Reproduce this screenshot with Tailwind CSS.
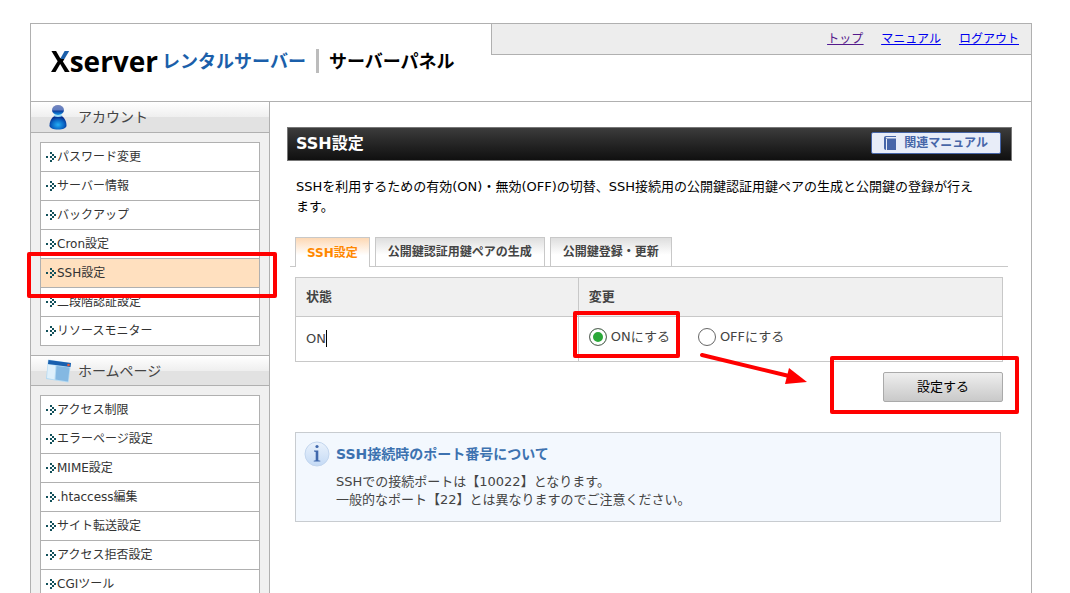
<!DOCTYPE html>
<html lang="ja">
<head>
    <meta charset="UTF-8">
    <meta name="viewport" content="width=device-width, initial-scale=1.0">
    <title>SSH設定 | サーバーパネル</title>
    <script src="https://cdn.jsdelivr.net/npm/@tailwindcss/browser@4"></script>
</head>
<body class="h-screen overflow-hidden bg-white font-['DejaVu_Sans','Noto_Sans_CJK_JP',sans-serif] text-[13px] text-[#444]">

    <!-- サイドメニューの矢印アイコン -->
    <svg class="hidden" aria-hidden="true">
        <symbol id="arrow" viewBox="0 0 10 10" shape-rendering="crispEdges">
            <path fill="#12505a" d="M0 4h2v2H0zM4 0h2v2H4zM6 2h2v2H6zM8 4h2v2H8zM6 6h2v2H6zM4 8h2v2H4zM4 4h2v2H4z"/>
        </symbol>
    </svg>

    <div class="ml-[30px] mr-[38px] mt-[23px] border border-[#b0b0b0]">

        <!-- ヘッダー -->
        <header class="flex h-[78px] items-start justify-between border-b border-[#b0b0b0]">
            <div class="flex items-center pl-5 pt-[18px]">
                <span class="font-['Open_Sans',sans-serif] text-[28px] leading-[38px] font-bold text-black"><span class="bg-[conic-gradient(from_5deg_at_50%_46%,#1b5faa_75deg,#000_75deg)] bg-clip-text text-transparent">X</span>server</span>
                <span class="ml-1 pt-0.5 text-lg font-bold text-[#1b5faa]">レンタルサーバー</span>
                <span class="ml-2.5 h-6 w-[3px] bg-[#bcbcbc]"></span>
                <span class="ml-2.5 pt-0.5 text-lg font-bold text-black">サーバーパネル</span>
            </div>
            <nav class="flex h-[31px] w-[54%] items-center justify-end gap-[18px] border-b border-l border-[#b0b0b0] bg-[#ededed] pr-3 text-xs text-[#0000ee] underline">
                <a href="#" class="text-[#551a8b]">トップ</a>
                <a href="#">マニュアル</a>
                <a href="#">ログアウト</a>
            </nav>
        </header>

        <div class="flex">

            <!-- サイドメニュー -->
            <aside class="w-[239px] shrink-0 border-r border-[#b0b0b0] bg-[#f0f0f0]">
                <h2 class="flex h-[31px] items-center border-b border-[#b0b0b0] bg-[linear-gradient(#fff,#efefef_50%,#e2e2e2_50%,#e2e2e2)] pl-[15px] text-sm">
                    <svg class="mr-1.5 h-[26px] w-[26px]" viewBox="0 0 26 26">
                        <defs>
                            <radialGradient id="body" cx=".5" cy=".65" r=".6"><stop offset="0" stop-color="#25aef5"/><stop offset=".6" stop-color="#0b66c4"/><stop offset="1" stop-color="#06298a"/></radialGradient>
                            <linearGradient id="head" x2="0" y2="1"><stop offset="0" stop-color="#7686bd"/><stop offset=".5" stop-color="#5f7cc0"/><stop offset=".6" stop-color="#0b3c9c"/><stop offset="1" stop-color="#1398ea"/></linearGradient>
                        </defs>
                        <path fill="url(#body)" d="M8.500 12h7c3.500 2 5 6 5 9.500 0 2.500-3.500 4-8.500 4s-8.500-1.500-8.500-4C3.500 18 5 14 8.500 12z"/>
                        <path fill="#9edcf8" d="M7.500 12c2.500 1.200 6.500 1.200 9 0l-1-1.800h-7z"/>
                        <ellipse cx="12" cy="6" rx="6" ry="5" fill="url(#head)"/>
                    </svg>
                    アカウント
                </h2>
                <ul class="mx-[9px] my-[9px] border-x border-t border-[#b0b0b0] bg-white text-xs text-[#333]">
                    <li class="border-b border-[#b0b0b0]"><a href="#" class="flex h-7 items-center gap-px pl-[5px]"><svg class="h-2.5 w-2.5"><use href="#arrow"/></svg>パスワード変更</a></li>
                    <li class="border-b border-[#b0b0b0]"><a href="#" class="flex h-7 items-center gap-px pl-[5px]"><svg class="h-2.5 w-2.5"><use href="#arrow"/></svg>サーバー情報</a></li>
                    <li class="border-b border-[#b0b0b0]"><a href="#" class="flex h-7 items-center gap-px pl-[5px]"><svg class="h-2.5 w-2.5"><use href="#arrow"/></svg>バックアップ</a></li>
                    <li class="border-b border-[#b0b0b0]"><a href="#" class="flex h-7 items-center gap-px pl-[5px]"><svg class="h-2.5 w-2.5"><use href="#arrow"/></svg>Cron設定</a></li>
                    <li class="relative border-b border-[#b0b0b0] bg-[#ffe0bf]">
                        <a href="#" class="flex h-7 items-center gap-px pl-[5px]"><svg class="h-2.5 w-2.5"><use href="#arrow"/></svg>SSH設定</a>
                        <span class="pointer-events-none absolute -top-[7px] -right-[18px] -bottom-[11px] -left-[14px] z-10 rounded-xs border-4 border-[#f00]"></span>
                    </li>
                    <li class="border-b border-[#b0b0b0]"><a href="#" class="flex h-7 items-center gap-px pl-[5px]"><svg class="h-2.5 w-2.5"><use href="#arrow"/></svg>二段階認証設定</a></li>
                    <li class="border-b border-[#b0b0b0]"><a href="#" class="flex h-7 items-center gap-px pl-[5px]"><svg class="h-2.5 w-2.5"><use href="#arrow"/></svg>リソースモニター</a></li>
                </ul>
                <h2 class="flex h-[31px] items-center border-y border-[#b0b0b0] bg-[linear-gradient(#fff,#efefef_50%,#e2e2e2_50%,#e2e2e2)] pl-[15px] text-sm">
                    <svg class="mr-1.5 h-[26px] w-[26px]" viewBox="0 0 26 26">
                        <path fill="#b4daf3" d="M2 1.500 25 5 22.500 24.500 0 21z"/>
                        <path fill="#dff0fb" d="M2 6.500 9.500 7.500 8.500 21.500 1 20z"/>
                        <path fill="#84b8e2" d="M10.500 8 23.500 9.500 22 23.500 9.500 21.500z"/>
                        <path fill="#185fae" d="M2.500 2 25 5 24.500 9 2 6z"/>
                        <circle cx="22.500" cy="7" r="1.300" fill="#f05a32"/>
                    </svg>
                    ホームページ
                </h2>
                <ul class="mx-[9px] my-[9px] border-x border-t border-[#b0b0b0] bg-white text-xs text-[#333]">
                    <li class="border-b border-[#b0b0b0]"><a href="#" class="flex h-7 items-center gap-px pl-[5px]"><svg class="h-2.5 w-2.5"><use href="#arrow"/></svg>アクセス制限</a></li>
                    <li class="border-b border-[#b0b0b0]"><a href="#" class="flex h-7 items-center gap-px pl-[5px]"><svg class="h-2.5 w-2.5"><use href="#arrow"/></svg>エラーページ設定</a></li>
                    <li class="border-b border-[#b0b0b0]"><a href="#" class="flex h-7 items-center gap-px pl-[5px]"><svg class="h-2.5 w-2.5"><use href="#arrow"/></svg>MIME設定</a></li>
                    <li class="border-b border-[#b0b0b0]"><a href="#" class="flex h-7 items-center gap-px pl-[5px]"><svg class="h-2.5 w-2.5"><use href="#arrow"/></svg>.htaccess編集</a></li>
                    <li class="border-b border-[#b0b0b0]"><a href="#" class="flex h-7 items-center gap-px pl-[5px]"><svg class="h-2.5 w-2.5"><use href="#arrow"/></svg>サイト転送設定</a></li>
                    <li class="border-b border-[#b0b0b0]"><a href="#" class="flex h-7 items-center gap-px pl-[5px]"><svg class="h-2.5 w-2.5"><use href="#arrow"/></svg>アクセス拒否設定</a></li>
                    <li class="border-b border-[#b0b0b0]"><a href="#" class="flex h-7 items-center gap-px pl-[5px]"><svg class="h-2.5 w-2.5"><use href="#arrow"/></svg>CGIツール</a></li>
                </ul>
            </aside>

            <!-- メイン -->
            <main class="min-w-0 flex-1 pt-[25px] pr-[19px] pl-[17px]">
                <div class="flex h-[34px] items-center justify-between border border-[#777] bg-linear-to-b from-[#3c3c3c] to-[#101010] pr-2.5 pl-2">
                    <h1 class="text-base font-bold text-white">SSH設定</h1>
                    <a href="#" class="mb-0.5 flex h-[22px] items-center rounded-xs border border-[#4766a8] bg-[#e8edf8] px-3 text-xs font-bold text-[#4766a8]">
                        <svg class="mr-2 h-3.5 w-3" viewBox="0 0 12 14">
                            <path fill="#4766a8" d="M2 0h10v1H2.500c-1 0-1 1.500 0 1.500H12V14H3V3H2v11C.800 14 0 13.200 0 12V2C0 .800.800 0 2 0z"/>
                        </svg>
                        関連マニュアル
                    </a>
                </div>

                <p class="mt-4 pr-2 pl-[9px] leading-5 text-black">SSHを利用するための有効(ON)・無効(OFF)の切替、SSH接続用の公開鍵認証用鍵ペアの生成と公開鍵の登録が行え<br>ます。</p>

                <!-- タブ -->
                <div class="mt-5 mr-1 ml-[3px] flex gap-[5px] border-b border-[#c8c8c8] pl-[5px] text-xs font-bold">
                    <a href="#" class="-mb-px flex h-[30px] items-center border border-b-0 border-[#c8c8c8] bg-linear-to-b from-[#fdd8b4] to-white to-60% px-[11px] text-[#ff8800]">SSH設定</a>
                    <a href="#" class="flex h-[29px] items-center border border-b-0 border-[#c8c8c8] bg-linear-to-b from-[#dedede] to-white to-60% px-3">公開鍵認証用鍵ペアの生成</a>
                    <a href="#" class="flex h-[29px] items-center border border-b-0 border-[#c8c8c8] bg-linear-to-b from-[#dedede] to-white to-60% px-3">公開鍵登録・更新</a>
                </div>

                <form class="mt-2.5 mr-[9px] ml-2">
                    <table class="w-full table-fixed border-collapse text-left">
                        <thead>
                            <tr class="h-[39px] bg-[#f0f0f0]">
                                <th class="w-[40%] border border-[#c8c8c8] px-2.5 font-bold">状態</th>
                                <th class="border border-[#c8c8c8] px-2.5 font-bold">変更</th>
                            </tr>
                        </thead>
                        <tbody>
                            <tr class="h-[45px]">
                                <td class="border border-[#c8c8c8] px-2.5"><span class="border-r border-black py-px">ON</span></td>
                                <td class="border border-[#c8c8c8] px-2.5">
                                    <div class="relative flex gap-7 pb-1">
                                        <label class="relative flex items-center gap-1">
                                            <input type="radio" name="ssh" checked class="h-[18px] w-[18px] appearance-none rounded-full border border-[#666] bg-white checked:bg-[#2aa838] checked:shadow-[inset_0_0_0_3px_#fff]">
                                            ONにする
                                            <span class="pointer-events-none absolute -top-4 -right-2.5 -bottom-[11px] -left-4 rounded-xs border-4 border-[#f00]"></span>
                                        </label>
                                        <label class="flex items-center gap-1">
                                            <input type="radio" name="ssh" class="h-[18px] w-[18px] appearance-none rounded-full border border-[#666] bg-white checked:bg-[#2aa838] checked:shadow-[inset_0_0_0_3px_#fff]">
                                            OFFにする
                                        </label>
                                        <svg class="pointer-events-none absolute top-6 left-[110px] h-9 w-[110px]" viewBox="0 0 110 36">
                                            <path d="M3 4 90 25" stroke="#f00" stroke-width="4" stroke-linecap="round"/>
                                            <path d="M90 17 108 31 86 33z" fill="#f00"/>
                                        </svg>
                                    </div>
                                </td>
                            </tr>
                        </tbody>
                    </table>
                    <div class="mt-2.5 flex justify-end">
                        <div class="relative">
                            <button type="submit" class="h-[30px] w-[120px] rounded-xs border border-[#aaa] bg-linear-to-b from-[#eee] to-[#c9c9c9] text-black">設定する</button>
                            <span class="pointer-events-none absolute -top-4 -right-4 -bottom-3 -left-[53px] rounded-xs border-4 border-[#f00]"></span>
                        </div>
                    </div>
                </form>

                <!-- お知らせ -->
                <section class="mt-[30px] mr-[11px] ml-2 flex h-[90px] gap-1.5 border border-[#c8ccd0] bg-[#f3f8fe] pt-2 pl-2">
                    <svg class="h-[26px] w-[26px] shrink-0" viewBox="0 0 26 26">
                        <defs><linearGradient id="info" x2="0" y2="1"><stop offset="0" stop-color="#eaf2fc"/><stop offset="1" stop-color="#c4daf5"/></linearGradient></defs>
                        <circle cx="13" cy="13" r="12" fill="url(#info)" stroke="#c3d6ee"/>
                        <circle cx="13" cy="5.500" r="1.600" fill="#4068ac"/>
                        <path fill="#4068ac" d="M10 9.500h4.300v9.700l2 .500v.800h-6.600v-.800l2-.500v-8.200l-1.700-.500z"/>
                    </svg>
                    <div>
                        <h3 class="text-sm leading-[26px] font-bold text-[#3d72b0]">SSH接続時のポート番号について</h3>
                        <p class="mt-1.5 leading-[18px]">SSHでの接続ポートは【10022】となります。<br>一般的なポート【22】とは異なりますのでご注意ください。</p>
                    </div>
                </section>
            </main>
        </div>
    </div>
</body>
</html>
